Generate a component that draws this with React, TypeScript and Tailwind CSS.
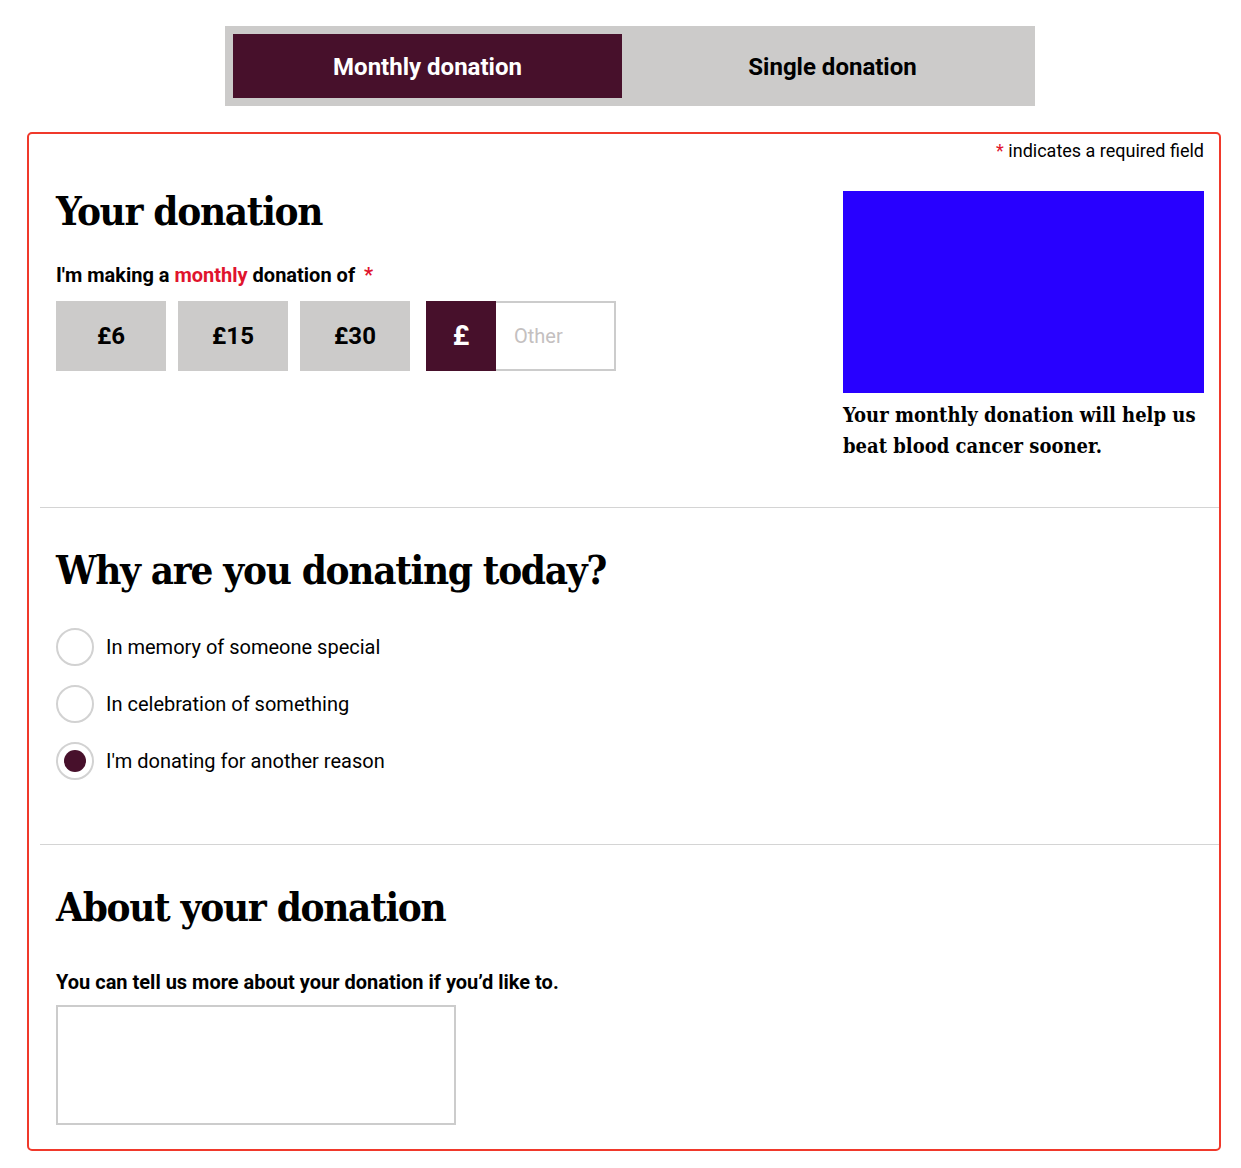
import React, { useState } from "react";

const slab = "font-['DejaVu_Serif_Condensed','DejaVu_Serif',serif] font-stretch-condensed font-bold";
const heading = `${slab} text-[40px] tracking-[-1.3px]`;

const reasons = [
  "In memory of someone special",
  "In celebration of something",
  "I'm donating for another reason",
];

const App: React.FC = () => {
  const [tab, setTab] = useState("monthly");
  const [amount, setAmount] = useState<string | null>(null);
  const [reason, setReason] = useState(2);

  return (
    <div className="min-h-screen bg-white pt-[26px] pb-4 font-['Roboto',sans-serif] text-black">
      {/* Tabs */}
      <div className="ml-[225px] flex h-[80px] w-[810px] bg-[#cccbca] p-2">
        <button
          onClick={() => setTab("monthly")}
          className={`w-[389px] pt-[2px] text-[24px] font-bold ${
            tab === "monthly" ? "bg-[#47102b] text-white" : "text-black"
          }`}
        >
          Monthly donation
        </button>
        <button
          onClick={() => setTab("single")}
          className={`flex-1 pl-[16px] pt-[2px] text-[24px] font-bold ${
            tab === "single" ? "bg-[#47102b] text-white" : "text-black"
          }`}
        >
          Single donation
        </button>
      </div>

      {/* Form box */}
      <div className="ml-[27px] mt-[26px] w-[1194px] rounded-[5px] border-2 border-[#f0392b] pl-[11px]">
        {/* Your donation */}
        <section className="pb-[45px] pl-4 pr-[15px] pt-[7px]">
          <p className="text-right text-[18px] leading-[20px]">
            <span className="text-[#e0142d]">*</span> indicates a required field
          </p>
          <div className="mt-[30px] flex justify-between">
            <div>
              <h2 className={`${heading} leading-[40px]`}>Your donation</h2>
              <p className="mt-[32px] text-[20px] font-bold leading-[24px]">
                I'm making a <span className="text-[#e0142d]">monthly</span> donation of{" "}
                <span className="ml-1 text-[#e0142d]">*</span>
              </p>
              <div className="mt-[14px] flex">
                {["£6", "£15", "£30"].map((a) => (
                  <button
                    key={a}
                    onClick={() => setAmount(a)}
                    className={`mr-3 h-[70px] w-[110px] text-[24px] font-bold ${
                      amount === a ? "bg-[#47102b] text-white" : "bg-[#cccbca]"
                    }`}
                  >
                    {a}
                  </button>
                ))}
                <div className="ml-1 flex h-[70px]">
                  <span className="flex w-[70px] items-center justify-center bg-[#47102b] text-[28px] font-bold text-white">
                    £
                  </span>
                  <input
                    placeholder="Other"
                    className="w-[120px] border-2 border-l-0 border-[#cccccc] px-[18px] text-[20px] outline-none placeholder:text-[#c4c0c0]"
                  />
                </div>
              </div>
            </div>
            <div className="w-[361px]">
              <div className="h-[202px] bg-[#2800ff]" />
              <p className={`${slab} mt-[7px] text-[20px] leading-[31px]`}>
                Your monthly donation will help us beat blood cancer sooner.
              </p>
            </div>
          </div>
        </section>

        {/* Why are you donating */}
        <section className="border-t border-[#d4d4d4] pb-[64px] pl-4 pt-[38px]">
          <h2 className={`${heading} leading-[48px]`}>Why are you donating today?</h2>
          <div className="mt-[34px] flex flex-col gap-[19px]">
            {reasons.map((r, i) => (
              <label key={r} className="flex cursor-pointer items-center" onClick={() => setReason(i)}>
                <span className="flex h-[38px] w-[38px] items-center justify-center rounded-full border-2 border-[#d2d2d2]">
                  {reason === i && <span className="h-[22px] w-[22px] rounded-full bg-[#47102b]" />}
                </span>
                <span className="ml-[12px] text-[20px]">{r}</span>
              </label>
            ))}
          </div>
        </section>

        {/* About your donation */}
        <section className="border-t border-[#d4d4d4] pb-[24px] pl-4 pt-[38px]">
          <h2 className={`${heading} leading-[48px]`}>About your donation</h2>
          <p className="mt-[39px] text-[20px] font-bold leading-[24px]">
            You can tell us more about your donation if you’d like to.
          </p>
          <textarea className="mt-[11px] block h-[120px] w-[400px] resize-none border-2 border-[#cccccc] outline-none" />
        </section>
      </div>
    </div>
  );
};

export default App;
